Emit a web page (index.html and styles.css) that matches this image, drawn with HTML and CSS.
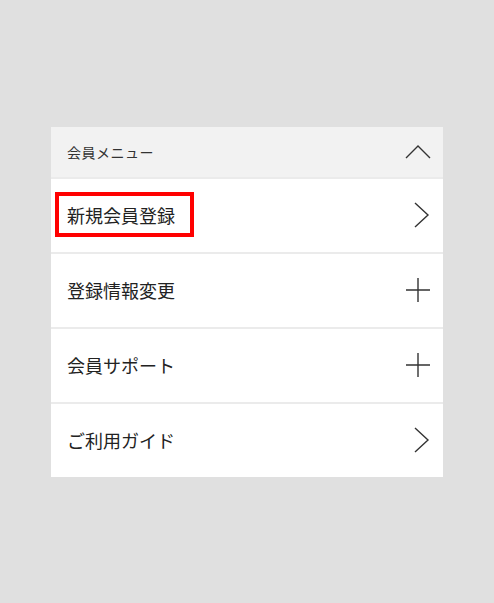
FILE: index.html
```html
<!DOCTYPE html>
<html lang="ja">
<head>
<meta charset="utf-8">
<title>会員メニュー</title>
<link rel="stylesheet" href="styles.css">
</head>
<body>
<div class="menu">
  <div class="menu-head">
    <span class="head-label">会員メニュー</span>
    <svg class="icon" viewBox="0 0 26 26" aria-hidden="true"><polyline points="1,19 13,7 25,19"/></svg>
  </div>
  <div class="menu-row">
    <span class="row-label highlighted">新規会員登録</span>
    <svg class="icon" viewBox="0 0 26 26" aria-hidden="true"><polyline points="10,1 23,13 10,25"/></svg>
  </div>
  <div class="menu-row">
    <span class="row-label">登録情報変更</span>
    <svg class="icon" viewBox="0 0 26 26" aria-hidden="true"><path d="M1 13H25M13 1V25"/></svg>
  </div>
  <div class="menu-row">
    <span class="row-label">会員サポート</span>
    <svg class="icon" viewBox="0 0 26 26" aria-hidden="true"><path d="M1 13H25M13 1V25"/></svg>
  </div>
  <div class="menu-row">
    <span class="row-label">ご利用ガイド</span>
    <svg class="icon" viewBox="0 0 26 26" aria-hidden="true"><polyline points="10,1 23,13 10,25"/></svg>
  </div>
</div>
</body>
</html>
```
FILE: styles.css
```css
html, body {
  margin: 0;
  padding: 0;
}
body {
  background: #e0e0e0;
  min-height: 100vh;
  display: flex;
  align-items: center;
  justify-content: center;
  font-family: "Noto Sans CJK JP", "Noto Sans", sans-serif;
  color: #222;
}
.menu {
  width: 392px;
  background: #fff;
  display: flex;
  flex-direction: column;
}
.menu-head {
  height: 50px;
  background: #f2f2f2;
  display: flex;
  align-items: center;
  justify-content: space-between;
  padding: 0 12px 0 16px;
}
.head-label {
  font-size: 14px;
  letter-spacing: 0.5px;
  color: #333;
}
.menu-row {
  height: 73px;
  border-top: 2px solid #ebebeb;
  display: flex;
  align-items: center;
  justify-content: space-between;
  padding: 0 12px 0 16px;
}
.row-label {
  font-size: 18px;
  line-height: 26px;
  position: relative;
}
.highlighted::after {
  content: "";
  position: absolute;
  left: -12px;
  right: -19px;
  top: -10px;
  bottom: -9px;
  border: 4px solid #ff0000;
}
.icon {
  width: 26px;
  height: 26px;
  fill: none;
  stroke: #333;
  stroke-width: 1.4;
}
```
